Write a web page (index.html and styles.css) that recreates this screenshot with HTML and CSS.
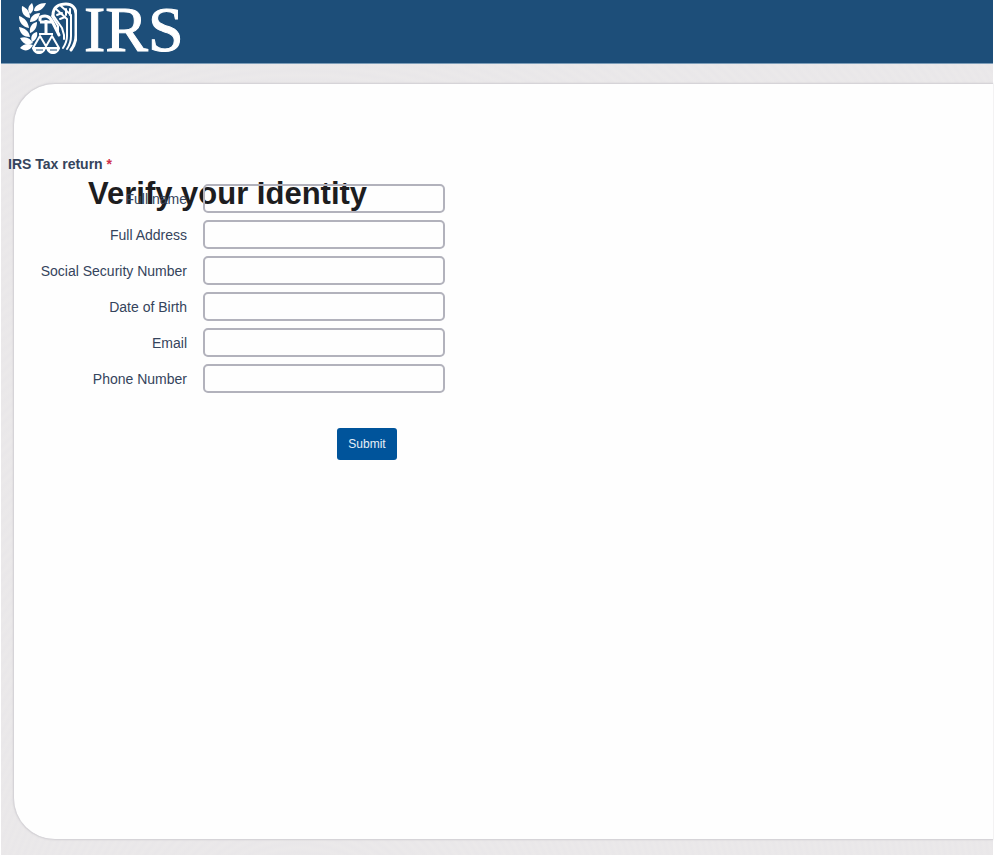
FILE: index.html
```html
<!DOCTYPE html>
<html lang="en">
<head>
    <meta charset="utf-8">
    <title>Verify your Identity</title>
    <link rel="stylesheet" href="styles.css">
</head>
<body>
    <header class="header">
        <svg class="emblem" viewBox="0 0 58 52" aria-hidden="true">
            <!-- laurel branch -->
            <g fill="#fff">
                <path d="M27 1c-7 0-12 3-12 8 6 1 10-3 12-8z"/>
                <path d="M13 1c-4 3-5 7-2 11 4-3 4-7 2-11z"/>
                <path d="M3 4c-1 7 2 11 8 12 0-6-3-10-8-12z"/>
                <path d="M21 11c-6 0-10 4-10 9 6 0 9-4 10-9z"/>
                <path d="M0 14c0 7 4 11 10 12-1-6-4-10-10-12z"/>
                <path d="M18 20c-5 1-8 5-7 11 5-2 7-6 7-11z"/>
                <path d="M0 25c1 7 5 10 11 10-1-6-5-9-11-10z"/>
                <path d="M18 30c-5 1-7 5-5 10 4-2 6-6 5-10z"/>
                <path d="M1 36c3 6 7 8 13 5-3-5-7-7-13-5z"/>
                <path d="M1 46c5 4 10 3 13-3-5-2-10-1-13 3z"/>
            </g>
            <!-- eagle head and wing -->
            <g fill="none" stroke="#fff" stroke-width="2" stroke-linecap="round" stroke-linejoin="round">
                <path d="M21 18v-2c1-2 3-2 5-2 4 0 5 2 7 5l7 14" stroke-width="3"/>
                <path d="M34 13c0-8 6-11 13-11 6 0 10 4 10 10v21c0 6-2 11-5 15" stroke-width="3"/>
                <path d="M34 13l9 13 2 7v4"/>
                <path d="M37 7l11 10v17c0 5-2 9-4 12"/>
                <path d="M42 4l10 9v21c0 5-2 10-4 13"/>
                <path d="M38 13l5-2M41 17l5-2M47 7v6M51 7v6"/>
                <path d="M33 14l6 10v6"/>
            </g>
            <!-- scales -->
            <g fill="none" stroke="#fff" stroke-width="2" stroke-linejoin="round">
                <path d="M21 20h12M27 18v15" stroke-width="3"/>
                <path d="M20 32h14"/>
                <path d="M21 34l-7 12h14zM33 34l-7 12h14z"/>
            </g>
            <path d="M13 46h14c-1 4-4 6-7 6s-6-2-7-6zM27 46h14c-1 4-4 6-7 6s-6-2-7-6z" fill="#fff"/>
            <path d="M17 48h7M31 48h7" stroke="#1d4e79"/>
        </svg>
        <span class="wordmark">IRS</span>
    </header>

    <main class="page">
        <section class="panel">
            <h1 class="title">Verify your Identity</h1>
            <div class="form">
                <h2 class="form-title">IRS Tax return <span class="required">*</span></h2>
                <div class="form-group">
                    <label for="fullName">Full name</label>
                    <input type="text" id="fullName" autocomplete="off">
                </div>
                <div class="form-group">
                    <label for="address">Full Address</label>
                    <input type="text" id="address" autocomplete="off">
                </div>
                <div class="form-group">
                    <label for="ssn">Social Security Number</label>
                    <input type="text" id="ssn" autocomplete="off">
                </div>
                <div class="form-group">
                    <label for="birth">Date of Birth</label>
                    <input type="text" id="birth" autocomplete="off">
                </div>
                <div class="form-group">
                    <label for="email">Email</label>
                    <input type="text" id="email" autocomplete="off">
                </div>
                <div class="form-group">
                    <label for="phone">Phone Number</label>
                    <input type="text" id="phone" autocomplete="off">
                </div>
                <!-- static mock-up, the button does nothing -->
                <button type="button" class="submit">Submit</button>
            </div>
        </section>
    </main>
</body>
</html>
```
FILE: styles.css
```css
* {
    box-sizing: border-box;
}
body {
    display: flex;
    flex-direction: column;
    min-height: 100vh;
    margin: 0;
    padding: 0 1px 1px;
    background: #fff;
    font-family: "Liberation Sans", Arial, sans-serif;
    font-size: 14px;
    color: #35445c;
    overflow-x: hidden;
}
.header {
    display: flex;
    gap: 7px;
    height: 64px;
    padding: 2px 18px;
    background: #1d4e79;
    border-bottom: 1px solid #7d9db8;
}
.emblem {
    width: 58px;
    height: 52px;
}
.wordmark {
    font-family: "Liberation Serif", "Times New Roman", serif;
    font-size: 64px;
    line-height: 56px;
    color: #fff;
    -webkit-text-stroke: 1px #fff;
}
.page {
    display: flex;
    flex: 1;
    padding: 19px 0 15px 12px;
    background:
        repeating-radial-gradient(ellipse at 30% 130%, #e9e7e9 0, #ebe9ea 3px, #e9e7e9 6px);
}
.panel {
    position: relative;
    flex: 1;
    padding-top: 72px;
    background: #fefefe;
    border: 1px solid #d6d4d8;
    border-right: none;
    border-radius: 42px 0 0 42px;
    box-shadow: 0 0 2px #d0ced2;
}
.title {
    position: absolute;
    top: 92px;
    left: 74px;
    margin: 0;
    font-size: 31px;
    line-height: 36px;
    color: #1d1d1f;
}
.form {
    position: relative;
    display: flex;
    flex-direction: column;
    gap: 7px;
    width: 437px;
    margin-left: -6px;
}
.form-title {
    margin: 0 0 5px;
    font-size: 14px;
    line-height: 16px;
}
.required {
    color: #d0314b;
}
.form-group {
    display: flex;
    align-items: center;
    gap: 16px;
}
.form-group label {
    flex: 1;
    text-align: right;
}
.form-group input {
    width: 242px;
    height: 29px;
    padding: 4px 8px;
    background: transparent;
    border: 2px solid #b2b2bc;
    border-radius: 5px;
    font: inherit;
}
.submit {
    align-self: flex-end;
    width: 60px;
    height: 32px;
    margin: 28px 48px 0 0;
    padding: 0;
    background: #00549b;
    color: #e6eff7;
    border: none;
    border-radius: 3px;
    font-family: inherit;
    font-size: 12px;
}
```
